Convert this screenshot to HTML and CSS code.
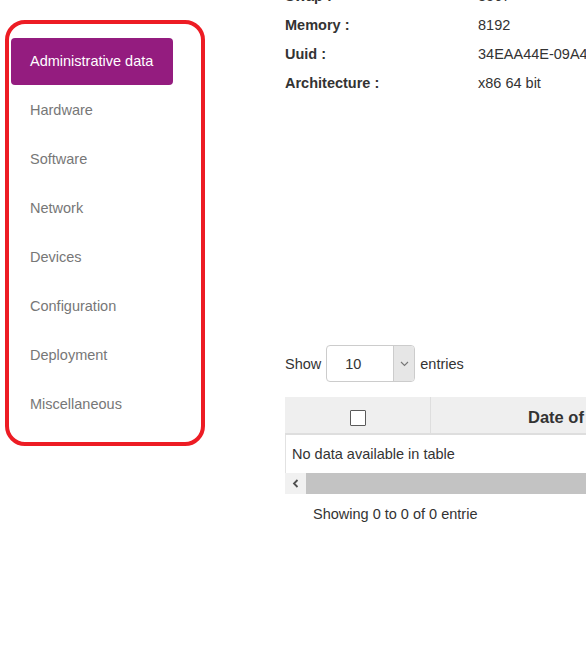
FILE: index.html
```html
<!DOCTYPE html>
<html>
<head>
<meta charset="utf-8">
<link rel="stylesheet" href="styles.css">
</head>
<body>
<div class="page">
  <aside class="sidebar">
    <ul class="nav">
      <li class="nav-item active">Administrative data</li>
      <li class="nav-item">Hardware</li>
      <li class="nav-item">Software</li>
      <li class="nav-item">Network</li>
      <li class="nav-item">Devices</li>
      <li class="nav-item">Configuration</li>
      <li class="nav-item">Deployment</li>
      <li class="nav-item">Miscellaneous</li>
    </ul>
  </aside>
  <main class="main">
    <div class="info">
      <div class="info-row"><span class="label">Swap :</span><span class="value">8567</span></div>
      <div class="info-row"><span class="label">Memory :</span><span class="value">8192</span></div>
      <div class="info-row"><span class="label">Uuid :</span><span class="value">34EAA44E-09A4-4C1B-9E2D-7F31A0B5C2D8</span></div>
      <div class="info-row"><span class="label">Architecture :</span><span class="value">x86 64 bit</span></div>
    </div>
    <div class="length">
      <span>Show</span>
      <div class="select">
        <span class="select-value">10</span>
        <span class="select-arrow">
          <svg width="9" height="6" viewBox="0 0 9 6"><path d="M1 1 L4.5 4.5 L8 1" fill="none" stroke="#777" stroke-width="1.1"/></svg>
        </span>
      </div>
      <span>entries</span>
    </div>
    <div class="table">
      <div class="thead">
        <div class="th th-check"><span class="checkbox"></span></div>
        <div class="th th-date">Date of installation</div>
      </div>
      <div class="tbody">
        <div class="empty">No data available in table</div>
      </div>
      <div class="scrollbar">
        <span class="scroll-btn">
          <svg width="7" height="9" viewBox="0 0 7 9"><path d="M5.5 1 L2 4.5 L5.5 8" fill="none" stroke="#505050" stroke-width="1.8"/></svg>
        </span>
        <span class="scroll-thumb"></span>
      </div>
    </div>
    <div class="info-text">Showing 0 to 0 of 0 entrie</div>
  </main>
</div>
</body>
</html>
```
FILE: styles.css
```css
html, body {
  margin: 0;
  padding: 0;
  overflow: hidden;
  background: #fff;
}
body {
  font-family: "Liberation Sans", Arial, sans-serif;
  font-size: 14.5px;
  color: #333;
}
.page {
  display: flex;
  align-items: flex-start;
  width: 1100px;
}
.sidebar {
  box-sizing: border-box;
  width: 200px;
  margin: 20px 0 0 5px;
  border: 4px solid #ed1c24;
  border-radius: 20px;
  padding: 14px 28px 14px 2px;
  flex-shrink: 0;
}
.nav {
  list-style: none;
  margin: 0;
  padding: 0;
  display: flex;
  flex-direction: column;
  gap: 2px;
}
.nav-item {
  box-sizing: border-box;
  height: 47px;
  display: flex;
  align-items: center;
  padding-left: 19px;
  padding-bottom: 2px;
  color: #777;
  border-radius: 4px;
}
.nav-item.active {
  background: #941c7f;
  color: #fff;
}
.main {
  margin-left: 80px;
  width: 800px;
  flex-shrink: 0;
}
.info {
  margin-top: -18px;
}
.info-row {
  display: grid;
  grid-template-columns: 193px 1fr;
  height: 29px;
  line-height: 29px;
  white-space: nowrap;
}
.label {
  font-weight: bold;
}
.length {
  margin-top: 247px;
  display: flex;
  align-items: center;
  gap: 5px;
  height: 37px;
}
.select {
  box-sizing: border-box;
  width: 89px;
  height: 37px;
  border: 1px solid #ccc;
  border-radius: 4px;
  display: flex;
  overflow: hidden;
}
.select-value {
  flex: 1;
  padding-left: 18px;
  display: flex;
  align-items: center;
}
.select-arrow {
  width: 20px;
  background: #e6e6e6;
  border-left: 1px solid #ccc;
  display: flex;
  align-items: center;
  justify-content: center;
}
.table {
  margin-top: 15px;
  width: 800px;
}
.thead {
  display: flex;
  height: 36px;
  background: #efefef;
  border-bottom: 2px solid #dedede;
}
.th {
  display: flex;
  align-items: center;
  padding-top: 5px;
  box-sizing: border-box;
}
.th-check {
  width: 146px;
  border-right: 1px solid #dedede;
  justify-content: center;
}
.checkbox {
  box-sizing: border-box;
  width: 16px;
  height: 16px;
  border: 1.5px solid #5a5a5a;
  border-radius: 1px;
  background: #fff;
}
.th-date {
  padding-left: 97px;
  font-weight: bold;
  font-size: 16.5px;
  white-space: nowrap;
}
.tbody {
  height: 38px;
  display: flex;
  align-items: center;
  border-left: 1px solid #e2e2e2;
  box-sizing: border-box;
  background: #fff;
}
.empty {
  padding-left: 6px;
}
.scrollbar {
  display: flex;
  height: 21px;
  background: #f1f1f1;
}
.scroll-btn {
  width: 21px;
  display: flex;
  align-items: center;
  justify-content: center;
  background: #f1f1f1;
}
.scroll-thumb {
  flex: 1;
  background: #c3c3c3;
}
.info-text {
  margin-top: 10px;
  padding-left: 28px;
  line-height: 20px;
}
```
